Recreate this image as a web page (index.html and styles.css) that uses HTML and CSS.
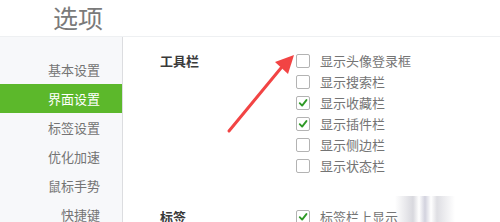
FILE: index.html
```html
<!DOCTYPE html>
<html lang="zh">
<head>
<meta charset="utf-8">
<link rel="stylesheet" href="styles.css">
</head>
<body>
<div class="page">
  <div class="header"><span class="title">选项</span></div>
  <div class="main">
    <div class="sidebar">
      <div class="nav-item">基本设置</div>
      <div class="nav-item active">界面设置</div>
      <div class="nav-item">标签设置</div>
      <div class="nav-item">优化加速</div>
      <div class="nav-item">鼠标手势</div>
      <div class="nav-item">快捷键</div>
    </div>
    <div class="content">
      <div class="section">
        <div class="section-title">工具栏</div>
        <div class="options">
          <div class="opt"><span class="box"></span><span class="label">显示头像登录框</span></div>
          <div class="opt"><span class="box"></span><span class="label">显示搜索栏</span></div>
          <div class="opt"><span class="box checked"><svg viewBox="0 0 14 14" class="tick"><path d="M3.2 7.2 L6 10 L11 3.6" /></svg></span><span class="label">显示收藏栏</span></div>
          <div class="opt"><span class="box checked"><svg viewBox="0 0 14 14" class="tick"><path d="M3.2 7.2 L6 10 L11 3.6" /></svg></span><span class="label">显示插件栏</span></div>
          <div class="opt"><span class="box"></span><span class="label">显示侧边栏</span></div>
          <div class="opt"><span class="box"></span><span class="label">显示状态栏</span></div>
        </div>
      </div>
      <div class="section second">
        <div class="section-title">标签</div>
        <div class="options">
          <div class="opt"><span class="box checked"><svg viewBox="0 0 14 14" class="tick"><path d="M3.2 7.2 L6 10 L11 3.6" /></svg></span><span class="label">标签栏上显示</span></div>
        </div>
      </div>
    </div>
  </div>
  <svg class="arrow" width="500" height="222" viewBox="0 0 500 222">
    <path d="M229 131 L281 68" stroke="#f24444" stroke-width="3" stroke-linecap="round" fill="none"/>
    <path d="M294 55 L275 62 L288 74 Z" fill="#f24444"/>
  </svg>
  <div class="glare"></div>
</div>
</body>
</html>
```
FILE: styles.css
```css
* { box-sizing: border-box; }
html, body { margin: 0; padding: 0; }
body {
  width: 500px;
  height: 222px;
  overflow: hidden;
  background: #ffffff;
  font-family: "Noto Sans CJK SC", "Microsoft YaHei", sans-serif;
}
.page {
  position: relative;
  width: 500px;
  height: 222px;
  overflow: hidden;
}
.header {
  height: 37px;
  padding-left: 53px;
  border-bottom: 1px solid #eef0f2;
}
.title {
  display: block;
  font-size: 25px;
  line-height: 34px;
  color: #7a7a7a;
}
.main {
  display: flex;
  height: 185px;
}
.sidebar {
  width: 123px;
  flex: none;
  background: #f7f8fa;
  border-right: 1px solid #dcdde0;
  padding-top: 18px;
}
.nav-item {
  height: 29px;
  line-height: 29px;
  text-align: right;
  padding-right: 22px;
  font-size: 13px;
  color: #747474;
}
.nav-item.active {
  background: #5cb82b;
  color: #ffffff;
}
.content {
  flex: 1;
  padding-top: 13px;
  padding-left: 37px;
}
.section {
  display: flex;
}
.section.second {
  margin-top: 30px;
}
.section-title {
  width: 136px;
  flex: none;
  font-size: 13px;
  font-weight: bold;
  color: #3a3a3a;
  line-height: 21px;
}
.options {
  display: flex;
  flex-direction: column;
}
.opt {
  display: flex;
  align-items: center;
  height: 21px;
}
.box {
  width: 14px;
  height: 14px;
  border: 1px solid #b3b3b3;
  border-radius: 2px;
  background: #ffffff;
  margin-right: 10px;
  display: flex;
  align-items: center;
  justify-content: center;
}
.tick {
  width: 14px;
  height: 14px;
}
.tick path {
  fill: none;
  stroke: #2f9a26;
  stroke-width: 2.2;
  stroke-linecap: round;
  stroke-linejoin: round;
}
.label {
  font-size: 13px;
  color: #747474;
  line-height: 21px;
}
.arrow {
  position: absolute;
  left: 0;
  top: 0;
  pointer-events: none;
}
.glare {
  position: absolute;
  left: 395px;
  top: 196px;
  width: 60px;
  height: 26px;
  background: linear-gradient(90deg, rgba(255,255,255,0) 0%, rgba(190,190,200,0.6) 30%, rgba(255,255,255,0.8) 40%, rgba(180,180,200,0.6) 50%, rgba(255,255,255,0.8) 60%, rgba(190,190,200,0.5) 70%, rgba(255,255,255,0) 100%);
}
```
